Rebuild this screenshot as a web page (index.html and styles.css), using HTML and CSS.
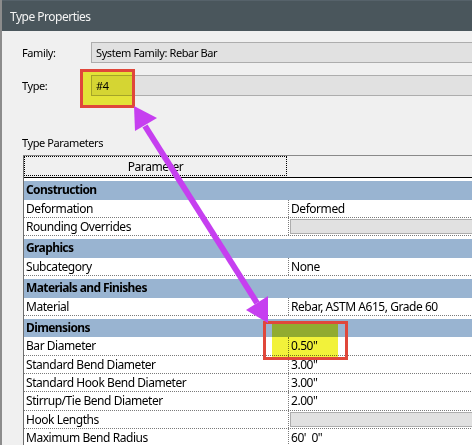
FILE: index.html
```html
<!DOCTYPE html>
<html lang="en">
<head>
<meta charset="utf-8">
<title>Type Properties</title>
<link rel="stylesheet" href="styles.css">
</head>
<body>
<div class="window">
  <div class="titlebar">Type Properties</div>
  <div class="content">
    <div class="field-row first">
      <span class="field-label">Family:</span>
      <div class="field">System Family: Rebar Bar</div>
    </div>
    <div class="field-row">
      <span class="field-label">Type:</span>
      <div class="field">#4</div>
    </div>
    <div class="section-label">Type Parameters</div>

    <div class="grid">
      <div class="grid-head">
        <div class="head-name"><span class="focus">Parameter</span></div>
        <div class="head-value"></div>
      </div>

      <div class="group">Construction</div>
      <div class="row"><div class="name">Deformation</div><div class="value">Deformed</div></div>
      <div class="row"><div class="name">Rounding Overrides</div><div class="value"><span class="button"></span></div></div>

      <div class="group">Graphics</div>
      <div class="row"><div class="name">Subcategory</div><div class="value">None</div></div>

      <div class="group">Materials and Finishes</div>
      <div class="row"><div class="name">Material</div><div class="value">Rebar, ASTM A615, Grade 60</div></div>

      <div class="group">Dimensions</div>
      <div class="row"><div class="name">Bar Diameter</div><div class="value">0.50"</div></div>
      <div class="row"><div class="name">Standard Bend Diameter</div><div class="value">3.00"</div></div>
      <div class="row"><div class="name">Standard Hook Bend Diameter</div><div class="value">3.00"</div></div>
      <div class="row"><div class="name">Stirrup/Tie Bend Diameter</div><div class="value">2.00"</div></div>
      <div class="row"><div class="name">Hook Lengths</div><div class="value"><span class="button"></span></div></div>
      <div class="row"><div class="name">Maximum Bend Radius</div><div class="value">60'&nbsp;&nbsp;0"</div></div>
    </div>
  </div>

  <!-- annotation: highlighter marks, boxes and the linking arrow -->
  <div class="hilite hilite-type"></div>
  <div class="callout callout-type"></div>
  <div class="hilite hilite-dia"></div>
  <div class="callout callout-dia"></div>
  <svg class="arrow" width="472" height="445" viewBox="0 0 472 445">
    <line x1="145" y1="126" x2="257" y2="303" stroke="#c63ff0" stroke-width="6"/>
    <polygon points="134,106 135,131 157,118" fill="#c63ff0"/>
    <polygon points="268,323 246,310 268,296" fill="#c63ff0"/>
  </svg>
</div>
</body>
</html>
```

FILE: styles.css
```css
* { box-sizing: border-box; }

html, body {
  margin: 0;
  padding: 0;
}

body {
  width: 472px;
  height: 445px;
  overflow: hidden;
  background: #f0f0f0;
  font-family: "Noto Sans", "DejaVu Sans", sans-serif;
  font-size: 12px;
  letter-spacing: -0.45px;
  color: #000;
}

.window {
  position: relative;
  width: 472px;
  height: 445px;
  overflow: hidden;
  border-left: 2px solid #8c8c8c;
}

.titlebar {
  height: 31px;
  margin-left: -2px;
  background: #4a565c;
  color: #f4f4f4;
  font-size: 12px;
  letter-spacing: -0.5px;
  line-height: 31px;
  padding-left: 10px;
  border-top: 1px solid #56626a;
}

.content {
  padding-left: 20px;
  font-size: 11px;
  letter-spacing: -0.4px;
}

.field-row {
  display: flex;
  align-items: center;
  margin-top: 12px;
  height: 21px;
}

.field-row.first {
  margin-top: 11px;
}

.field-label {
  width: 69px;
  flex: none;
}

.field {
  flex: 1;
  height: 21px;
  margin-right: -10px;
  background: #e1e1e1;
  border-top: 1px solid #adadad;
  border-bottom: 1px solid #adadad;
  border-left: 1px solid #adadad;
  padding-left: 4px;
  line-height: 19px;
}

.section-label {
  margin-top: 38px;
  height: 17px;
  line-height: 17px;
}

.grid {
  margin-top: 4px;
  margin-left: 1px;
  width: 470px;
  background: #fff;
  border-left: 1px solid #6e6e6e;
  border-top: 1px solid #8a8a8a;
  font-size: 12px;
  letter-spacing: -0.45px;
}

.grid-head {
  display: flex;
  height: 22px;
  background: #f0f0f0;
  border-bottom: 1px solid #000;
}

.head-name {
  width: 264px;
  flex: none;
  padding: 0 1px 1px 0;
}

.focus {
  display: block;
  height: 100%;
  border: 1px dotted #000;
  text-align: center;
  line-height: 19px;
}

.head-value {
  flex: 1;
}

.group {
  margin-top: 3px;
  height: 18.5px;
  line-height: 18px;
  background: #99b4d1;
  font-weight: bold;
  letter-spacing: -0.6px;
  padding-left: 2px;
}

.row {
  display: flex;
  height: 18.35px;
  border-bottom: 1px dotted #7a7a7a;
}

.name {
  width: 264px;
  flex: none;
  padding-left: 2px;
  line-height: 17px;
}

.value {
  flex: 1;
  border-left: 1px dotted #7a7a7a;
  padding-left: 2px;
  line-height: 17px;
}

.button {
  display: block;
  margin: 1px 0 1px -1px;
  height: 15px;
  background: #e1e1e1;
  border: 1px solid #adadad;
  border-right: none;
}

/* annotation overlay */
.hilite {
  position: absolute;
  background: #f2f23a;
  mix-blend-mode: multiply;
}

.hilite-type {
  left: 81px;
  top: 72px;
  width: 50px;
  height: 34px;
}

.hilite-dia {
  left: 270px;
  top: 323px;
  width: 66px;
  height: 34px;
}

.callout {
  position: absolute;
  border: 3px solid #e0473b;
}

.callout-type {
  left: 78px;
  top: 69px;
  width: 55px;
  height: 39px;
}

.callout-dia {
  left: 261px;
  top: 321px;
  width: 85px;
  height: 39px;
}

.arrow {
  position: absolute;
  left: -2px;
  top: 0;
  pointer-events: none;
}
```
